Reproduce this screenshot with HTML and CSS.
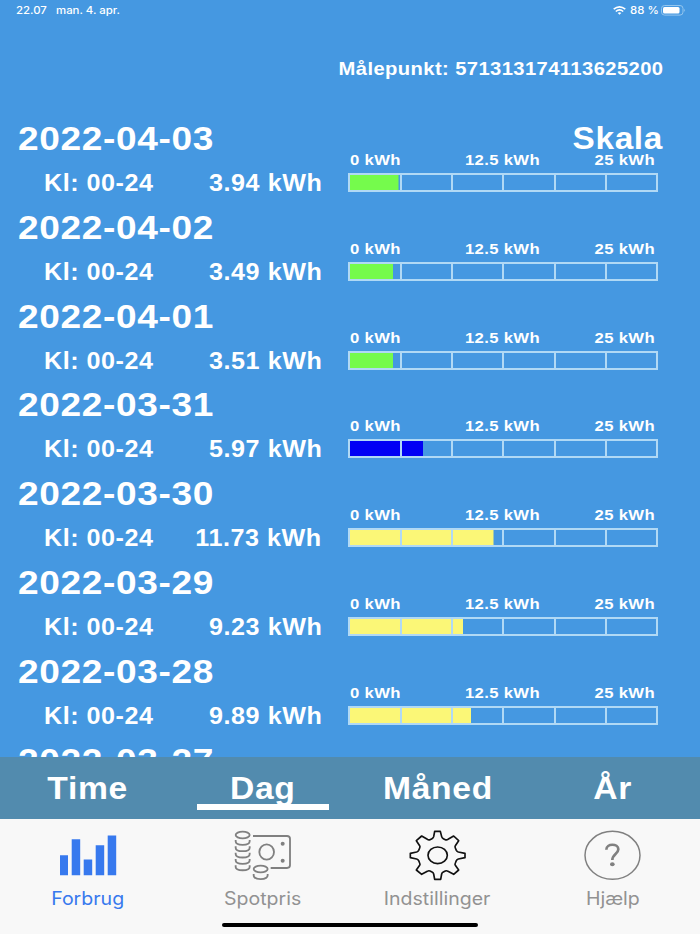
FILE: index.html
```
<!DOCTYPE html>
<html lang="da">
<head>
<meta charset="utf-8">
<title>Forbrug</title>
<link rel="stylesheet" href="styles.css">
</head>
<body>
<div class="app">
  <header class="status">
    <div class="status-left"><span class="wide clock">22.07</span><span class="wide">man. 4. apr.</span></div>
    <div class="status-right">
      <svg class="wifi" viewBox="0 0 13 9" fill="none" stroke="#fff" stroke-width="1.6"><path d="M.7 3.2Q6.5-1.5 12.3 3.2M2.8 5.5Q6.5 2.4 10.2 5.5"/><path d="M4.7 7Q6.5 5.6 8.3 7L6.5 8.7Z" fill="#fff" stroke="none"/></svg>
      <span class="wide percent">88 %</span>
      <svg class="battery" viewBox="0 0 25 11"><rect x=".5" y=".5" width="21.5" height="9.6" rx="3" fill="none" stroke="#94c6ee"/><rect x="2" y="2" width="16.5" height="6.6" rx="1.5" fill="#fff"/><path d="M23.2 3.7Q25 5.3 23.2 7Z" fill="#94c6ee"/></svg>
    </div>
  </header>
  <div class="meter-id"><span class="wide-right">Målepunkt: 571313174113625200</span></div>
  <main class="list" id="list"></main>
  <nav class="periods">
    <div class="period"><span>Time</span></div>
    <div class="period active"><span>Dag</span></div>
    <div class="period"><span>Måned</span></div>
    <div class="period"><span>År</span></div>
  </nav>
  <footer class="tabs">
    <div class="tab selected">
      <svg viewBox="0 0 90 65" fill="#3779ee"><path d="M15 35.3h8v20h-8zM26.700 19.3h8.500v36h-8.500zM38.700 39.500h8.500v15.800h-8.500zM50.700 25.300h8.500v30h-8.500zM62.700 15.500h8.500v39.800h-8.500z"/></svg>
      <span class="tab-name">Forbrug</span>
    </div>
    <div class="tab">
      <svg viewBox="0 0 270 195" fill="none" stroke="#808080" stroke-width="5.500">
        <ellipse cx="68" cy="45" rx="21" ry="10"/>
        <path d="M47 60v4c0 14 42 14 42 0v-4M47 79v4c0 14 42 14 42 0v-4M47 98v4c0 14 42 14 42 0v-4M47 117v4c0 14 42 14 42 0v-4M47 136v5c0 13 42 13 42 0v-5"/>
        <path d="M99 48h102q9 0 9 8v80q0 8-9 8h-49"/>
        <ellipse cx="140" cy="96" rx="22" ry="23"/>
        <ellipse cx="122" cy="147" rx="21" ry="10"/>
        <path d="M101 162v4c0 15 42 15 42 0v-4"/>
        <g fill="#808080" stroke="none"><circle cx="188" cy="71" r="6"/><circle cx="188" cy="122" r="6"/></g>
      </svg>
      <span class="tab-name">Spotpris</span>
    </div>
    <div class="tab">
      <svg viewBox="0 0 270 195" fill="none" stroke="#111" stroke-width="5" stroke-linejoin="round"><path d="M119 34H136L140 50Q141 54 145 56L151 59Q155 61 159 58L176 48L191 62L181 77Q179 80 181 84L184 91Q186 95 190 96L210 100V113L190 117Q186 118 184 122L181 129Q179 133 181 136L191 150L176 163L159 154Q155 151 151 153L145 156Q141 158 140 162L137 178H119L116 162Q115 158 111 156L105 153Q101 151 97 154L80 163L64 150L74 136Q76 133 74 129L71 122Q69 118 65 117L46 113V100L65 96Q69 95 71 91L74 84Q76 80 74 77L64 62L80 48L97 58Q101 61 105 59L111 56Q115 54 116 50Z"/><ellipse cx="128" cy="106" rx="29" ry="25"/></svg>
      <span class="tab-name">Indstillinger</span>
    </div>
    <div class="tab">
      <svg viewBox="0 0 270 195" fill="none" stroke="#808080" stroke-width="4.500"><ellipse cx="127.500" cy="106" rx="82.500" ry="72"/><path d="M109 89C109 69 145 70 145 88C145 102 127 103 127 120" stroke-width="8"/><ellipse cx="127" cy="133" rx="7" ry="6" fill="#808080" stroke="none"/></svg>
      <span class="tab-name">Hjælp</span>
    </div>
  </footer>
  <div class="home-bar"></div>
</div>
<script src="app.js"></script>
</body>
</html>
```
FILE: styles.css
```
* { box-sizing: border-box; }
body { margin: 0; font-family: "Liberation Sans", Arial, sans-serif; }
.app {
  position: relative;
  width: 700px;
  height: 934px;
  display: flex;
  flex-direction: column;
  overflow: hidden;
  background: #4598e1;
  color: #fff;
  white-space: nowrap;
}
.status {
  height: 20px;
  flex: none;
  display: flex;
  justify-content: space-between;
  padding: 0 14px 0 15.5px;
  font: 500 10px/20px Inter, sans-serif;
}
.status-left, .status-right { display: flex; align-items: center; }
.clock { width: 40.5px; }
.wide { display: inline-block; transform: scaleX(1.14); transform-origin: left; }
.wifi { width: 13px; height: 9px; margin-right: 4px; }
.percent { width: 31px; }
.battery { width: 25px; height: 11px; }
.meter-id {
  height: 100px;
  flex: none;
  padding: 37px 37px 0 0;
  text-align: right;
  font-weight: bold;
  font-size: 18.6px;
  line-height: 23px;
}
.wide-right { display: inline-block; transform: scaleX(1.085); transform-origin: right; letter-spacing: .38px; }
.list { height: 637px; flex: none; overflow: hidden; }
.entry { height: 88.83px; font-weight: bold; }
.entry-head {
  height: 32px;
  display: flex;
  justify-content: space-between;
  padding: 0 37px 0 18px;
  line-height: 37px;
}
.date { font-size: 34px; letter-spacing: .6px; transform: scaleX(1.09); transform-origin: left; }
.skala { font-size: 30.6px; letter-spacing: .6px; transform: scaleX(1.09); transform-origin: right; }
.entry-body { display: flex; }
.hours { width: 140px; margin-left: 44px; }
.amount { width: 138px; text-align: right; }
.hours, .amount { font-size: 23.6px; line-height: 62px; }
.hours span, .amount span { display: inline-block; letter-spacing: .5px; transform: scaleX(1.065); transform-origin: left; }
.amount span { transform-origin: right; }
.scale { width: 310px; margin-left: 26px; }
.labels {
  height: 21px;
  display: flex;
  justify-content: space-between;
  padding: 0 3px 0 2px;
  font-size: 14.9px;
  line-height: 16px;
}
.labels span { letter-spacing: .3px; transform: scaleX(1.12); }
.labels span:first-child { transform-origin: left; }
.labels span:nth-child(2) { margin-left: 8px; }
.labels span:last-child { transform-origin: right; }
.gauge {
  height: 19px;
  display: grid;
  grid-template-columns: 50px repeat(5, 1fr);
  border: 2px solid #b0d9f5;
  background: linear-gradient(var(--fill), var(--fill)) no-repeat left / var(--amount) 100% padding-box;
}
.gauge i + i { border-left: 2px solid #b0d9f5; }
.low { --fill: #75fb4c; }
.mid { --fill: #0000f5; }
.high { --fill: #fbf777; }
.periods {
  height: 62px;
  flex: none;
  display: grid;
  grid-template-columns: repeat(4, 1fr);
  background: #528bae;
  font-weight: bold;
  font-size: 30.6px;
  line-height: 62px;
}
.period { display: flex; flex-direction: column; align-items: center; }
.period span { letter-spacing: .6px; transform: scaleX(1.1); }
.active::after { content: ""; width: 132px; height: 6px; margin-top: -15px; background: #fff; z-index: 1; }
.tabs {
  flex: 1;
  display: grid;
  grid-template-columns: repeat(4, 1fr);
  background: #f8f8f8;
  color: #929292;
}
.tab { display: flex; flex-direction: column; align-items: center; padding-top: 1px; }
.tab svg { width: 90px; height: 65px; margin-left: 5px; }
.tab-name { font: 400 18px/24px Inter, sans-serif; margin-top: 2px; transform: scaleX(1.085); }
.selected { color: #3779ee; }
.home-bar { position: absolute; left: 222px; top: 923px; width: 256px; height: 4px; border-radius: 2px; background: #000; }
```
FILE: app.js
```
const days = [
  ["2022-04-03", "3.94", "low", 48.5],
  ["2022-04-02", "3.49", "low", 43],
  ["2022-04-01", "3.51", "low", 43.3],
  ["2022-03-31", "5.97", "mid", 73],
  ["2022-03-30", "11.73", "high", 143.5],
  ["2022-03-29", "9.23", "high", 113],
  ["2022-03-28", "9.89", "high", 121],
  ["2022-03-27", "", "low", 0]
];

document.getElementById("list").innerHTML = days.map(([date, kwh, level, fill], i) => `
  <section class="entry">
    <div class="entry-head"><span class="date">${date}</span>${i === 0 ? '<span class="skala">Skala</span>' : ""}</div>
    ${kwh ? `<div class="entry-body">
      <div class="hours"><span>Kl: 00-24</span></div>
      <div class="amount"><span>${kwh} kWh</span></div>
      <div class="scale">
        <div class="labels"><span>0 kWh</span><span>12.5 kWh</span><span>25 kWh</span></div>
        <div class="gauge ${level}" style="--amount:${fill}px"><i></i><i></i><i></i><i></i><i></i><i></i></div>
      </div>
    </div>` : ""}
  </section>`).join("");
```
